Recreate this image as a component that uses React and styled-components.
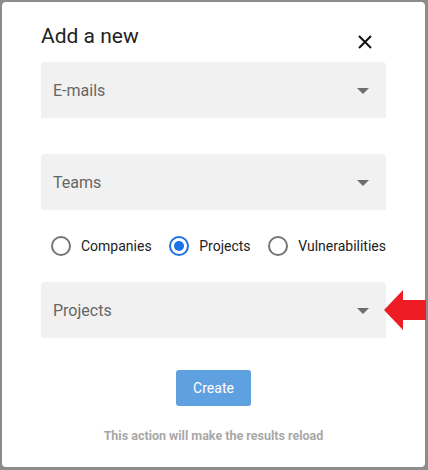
import React from 'react';
import styled, { createGlobalStyle } from 'styled-components';

const Global = createGlobalStyle`
    html, body {
        margin: 0;
        padding: 0;
        background: #8c8c8c;
        font-family: Roboto, "Liberation Sans", Arial, sans-serif;
    }
`;

const Frame = styled.div`
    width: 428px;
    height: 470px;
    padding: 2px 3px 3px 2px;
    box-sizing: border-box;
    position: relative;
`;

const Card = styled.div`
    height: 100%;
    background: #fff;
    border-radius: 4px;
    box-sizing: border-box;
    padding: 22px 39px 0 39px;
    display: flex;
    flex-direction: column;
`;

const Header = styled.div`
    display: flex;
    justify-content: space-between;
    align-items: flex-start;
    height: 38px;
`;

const Title = styled.h2`
    margin: 0;
    font-size: 21px;
    font-weight: 400;
    color: #222;
    line-height: 24px;
`;

const Close = styled.button`
    border: none;
    background: none;
    padding: 0;
    margin: 10px 13px 0 0;
    width: 16px;
    height: 16px;
    cursor: pointer;
    display: flex;
`;

const Select = styled.div`
    height: 56px;
    background: #f1f1f1;
    border-radius: 4px 4px 0 0;
    display: flex;
    align-items: center;
    justify-content: space-between;
    padding: 0 17px 0 12px;
    margin-bottom: ${p => p.$gap || 0}px;
`;

const SelectLabel = styled.span`
    font-size: 16px;
    color: #666;
`;

const Caret = styled.span`
    width: 0;
    height: 0;
    border-left: 6px solid transparent;
    border-right: 6px solid transparent;
    border-top: 6px solid #6e6e6e;
    margin-top: 1px;
`;

const RadioRow = styled.div`
    display: flex;
    align-items: center;
    justify-content: space-between;
    padding-left: 10px;
    height: 72px;
`;

const RadioItem = styled.label`
    display: flex;
    align-items: center;
    gap: 10px;
    font-size: 14px;
    color: #222;
`;

const RadioCircle = styled.span`
    width: 20px;
    height: 20px;
    box-sizing: border-box;
    border-radius: 50%;
    border: 2px solid ${p => (p.$on ? '#1a73e8' : '#757575')};
    display: flex;
    align-items: center;
    justify-content: center;
    &::after {
        content: '';
        width: 10px;
        height: 10px;
        border-radius: 50%;
        background: ${p => (p.$on ? '#1a73e8' : 'transparent')};
    }
`;

const Actions = styled.div`
    display: flex;
    justify-content: center;
    margin-top: 32px;
`;

const CreateButton = styled.button`
    width: 75px;
    height: 36px;
    background: #5fa0e0;
    color: #fff;
    border: none;
    border-radius: 3px;
    font-family: inherit;
    font-size: 14px;
`;

const Note = styled.p`
    margin: 22px 0 0;
    text-align: center;
    font-size: 12.5px;
    font-weight: 700;
    color: #a8a8a8;
`;

const Pointer = styled.svg`
    position: absolute;
    left: 384px;
    top: 289px;
`;

const options = ['Companies', 'Projects', 'Vulnerabilities'];

export default function App() {
    const selected = 'Projects';
    return (
        <Frame>
            <Global />
            <Card>
                <Header>
                    <Title>Add a new</Title>
                    <Close aria-label="close">
                        <svg width="16" height="16" viewBox="0 0 16 16">
                            <path d="M2 2L14 14M14 2L2 14" stroke="#111" strokeWidth="2" />
                        </svg>
                    </Close>
                </Header>
                <Select $gap={36}>
                    <SelectLabel>E-mails</SelectLabel>
                    <Caret />
                </Select>
                <Select>
                    <SelectLabel>Teams</SelectLabel>
                    <Caret />
                </Select>
                <RadioRow>
                    {options.map(o => (
                        <RadioItem key={o}>
                            <RadioCircle $on={o === selected} />
                            {o}
                        </RadioItem>
                    ))}
                </RadioRow>
                <Select>
                    <SelectLabel>Projects</SelectLabel>
                    <Caret />
                </Select>
                <Actions>
                    <CreateButton>Create</CreateButton>
                </Actions>
                <Note>This action will make the results reload</Note>
            </Card>
            <Pointer width="42" height="42" viewBox="0 0 42 42">
                <path d="M0 21L19 1V11H42V31H19V41Z" fill="#ee1c25" />
            </Pointer>
        </Frame>
    );
}
